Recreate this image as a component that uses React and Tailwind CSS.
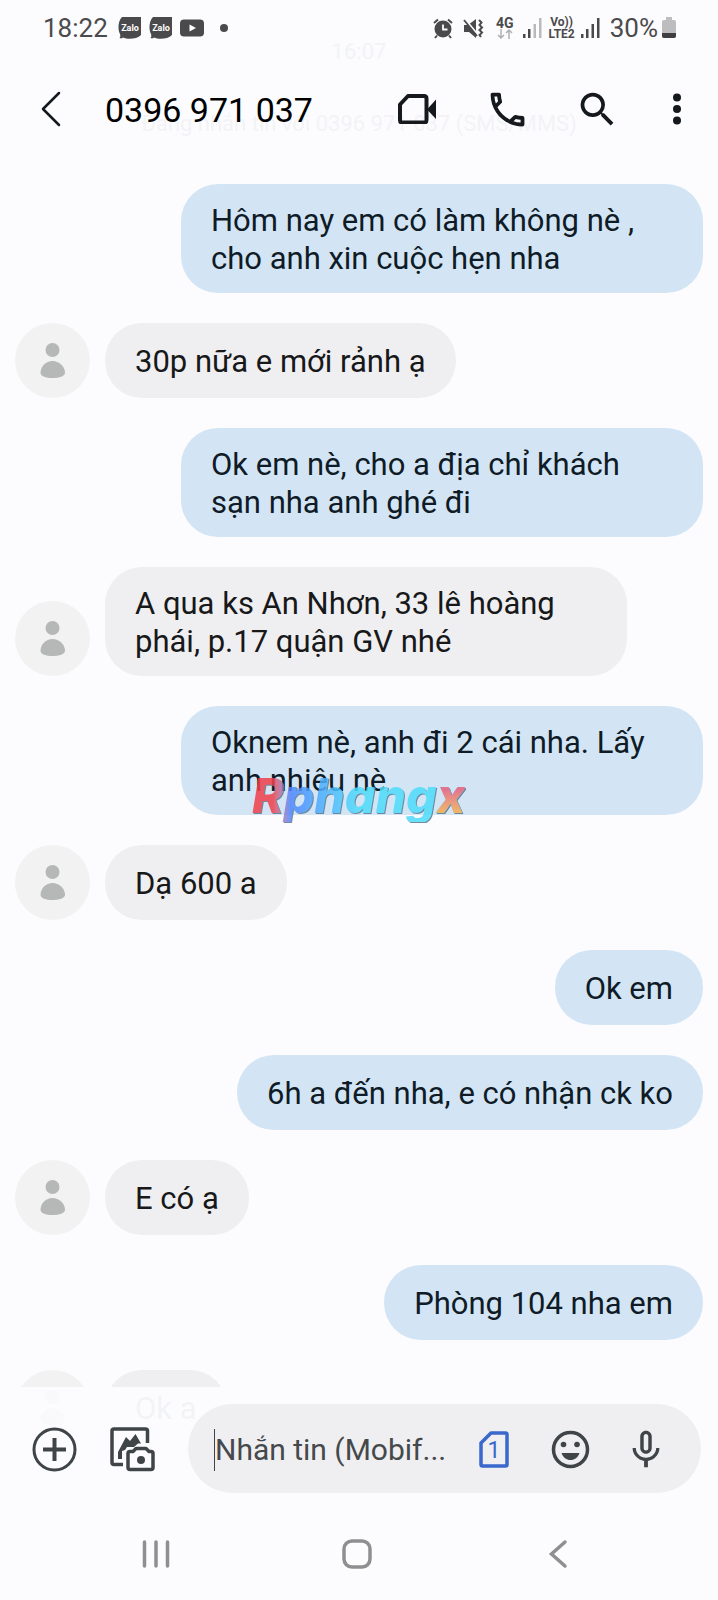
import { useState } from "react";
import { MdMicNone, MdOutlineCall, MdSearch } from "react-icons/md";

const messages = [
  { id: 1, mine: true, text: "Hôm nay em có làm không nè ,\ncho anh xin cuộc hẹn nha" },
  { id: 2, mine: false, text: "30p nữa e mới rảnh ạ" },
  { id: 3, mine: true, text: "Ok em nè, cho a địa chỉ khách\nsạn nha anh ghé đi" },
  { id: 4, mine: false, text: "A qua ks An Nhơn, 33 lê hoàng\nphái, p.17 quận GV nhé" },
  { id: 5, mine: true, text: "Oknem nè, anh đi 2 cái nha. Lấy\nanh nhiêu nè", watermark: true },
  { id: 6, mine: false, text: "Dạ 600 a" },
  { id: 7, mine: true, text: "Ok em" },
  { id: 8, mine: true, text: "6h a đến nha, e có nhận ck ko" },
  { id: 9, mine: false, text: "E có ạ" },
  { id: 10, mine: true, text: "Phòng 104 nha em" },
  { id: 11, mine: false, text: "Ok a" },
];

const ZaloIcon = () => (
  <svg width="24" height="24" viewBox="0 0 24 24">
    <path
      d="M4 1H23V19C19 23 10 24 5 21.500C4 22.500 3 22.500 1.500 22C2.500 21 2.500 20 2 18C-.5 13 0 5 4 1Z"
      fill="#4a4a4c"
    />
    <text
      x="12"
      y="15"
      textAnchor="middle"
      fontSize="9"
      fontWeight="700"
      fontFamily="Roboto, sans-serif"
      fill="#fff"
    >
      Zalo
    </text>
  </svg>
);

const YoutubeIcon = () => (
  <svg width="24" height="18" viewBox="0 0 24 18">
    <rect y="0.500" width="24" height="17" rx="4" fill="#4a4a4c" />
    <path d="M9.500 5.500L16 9L9.500 12.500Z" fill="#fff" />
  </svg>
);

const AlarmIcon = () => (
  <svg width="20" height="21" viewBox="0 0 20 21">
    <circle cx="10" cy="11" r="8.500" fill="#4a4a4c" />
    <path
      d="M1 5L5 1.500M19 5L15 1.500M4 17.500L2 20M16 17.500L18 20"
      stroke="#4a4a4c"
      strokeWidth="2"
    />
    <path d="M10 6.500V11.500H14.500" fill="none" stroke="#fcfcfe" strokeWidth="1.800" />
  </svg>
);

const MuteIcon = () => (
  <svg width="21" height="21" viewBox="0 0 21 21">
    <path d="M1 7H5L13 1V20L6 14H1Z" fill="#4a4a4c" />
    <path d="M1 0L15 17" stroke="#fcfcfe" strokeWidth="2" />
    <path d="M1 2L14 18" stroke="#4a4a4c" strokeWidth="1.800" />
    <path
      d="M16 2L18.500 4.500L16.500 7L19 9.500L16.500 12L19 14.500L16.500 17L18 19"
      fill="none"
      stroke="#4a4a4c"
      strokeWidth="2"
    />
  </svg>
);

const SignalIcon = ({ weak }) => (
  <svg width="19" height="20" viewBox="0 0 19 20" fill="#4a4a4c">
    <rect x="0" y="16" width="2.500" height="4" />
    <rect x="5" y="11" width="2.500" height="9" />
    <rect x="10.500" y="6" width="2.500" height="14" fill={weak ? "#b9b9bb" : "#4a4a4c"} />
    <rect x="16" y="0" width="2.500" height="20" fill={weak ? "#b9b9bb" : "#4a4a4c"} />
  </svg>
);

const BatteryIcon = () => (
  <svg width="14" height="22" viewBox="0 0 14 22">
    <path
      d="M4 0H10V3H12Q14 3 14 5V19Q14 21 12 21H2Q0 21 0 19V5Q0 3 2 3H4Z"
      fill="#bdbdbf"
    />
    <path d="M0 16H14V19Q14 21 12 21H2Q0 21 0 19Z" fill="#3f3f41" />
  </svg>
);

const StatusBar = () => (
  <div className="flex h-14 items-center justify-between pr-[42px] pl-[43px] text-[26px] leading-8 text-[#4a4a4c]">
    <div className="flex items-center gap-2">
      <span>18:22</span>
      <div className="ml-[2px] flex items-center gap-[7px]">
        <ZaloIcon />
        <ZaloIcon />
        <YoutubeIcon />
      </div>
      <span className="ml-2 h-2 w-2 rounded-full bg-[#4a4a4c]" />
    </div>
    <div className="flex items-center gap-[10px]">
      <AlarmIcon />
      <MuteIcon />
      <div className="ml-[2px] flex flex-col items-center text-[14px] leading-[12px] font-bold">
        4G
        <svg width="16" height="10" viewBox="0 0 16 10" fill="none" stroke="#b0b0b2" strokeWidth="1.500">
          <path d="M4 0V9M1 6L4 9L7 6M12 10V1M9 4L12 1L15 4" />
        </svg>
      </div>
      <SignalIcon weak />
      <div className="-mx-1 flex flex-col items-center text-[12px] leading-[12px] font-bold">
        <span>Vo))</span>
        <span>LTE2</span>
      </div>
      <SignalIcon />
      <div className="flex items-center gap-1">
        <span>30%</span>
        <BatteryIcon />
      </div>
    </div>
  </div>
);

const Toolbar = () => (
  <div className="flex h-[104px] items-center pt-[2px] pr-[31px] pl-[31px] text-[#15181c]">
    <button aria-label="Quay lại" className="flex h-10 w-10 items-center justify-center">
      <svg width="20" height="36" viewBox="0 0 20 36" fill="none" stroke="currentColor" strokeWidth="2.500" strokeLinecap="round" strokeLinejoin="round">
        <path d="M18 2L2 18L18 34" />
      </svg>
    </button>
    <h1 className="ml-[34px] flex-1 pt-[2px] text-[34px] leading-10 whitespace-nowrap text-black">
      0396 971 037
    </h1>
    <div className="flex items-center gap-[50px]">
      <button aria-label="Gọi video" className="flex h-10 w-10 items-center justify-center">
        <svg width="38" height="30" viewBox="0 0 38 30">
          <path
            d="M10 2H26Q28.500 2 28.500 4.500V26Q28.500 28.500 26 28.500H4Q2 28.500 2 26V10.500Z"
            fill="none"
            stroke="currentColor"
            strokeWidth="4"
            strokeLinejoin="round"
          />
          <path d="M29 15.500L38 5.500V25Z" fill="currentColor" />
        </svg>
      </button>
      <button aria-label="Gọi" className="flex h-10 w-10 items-center justify-center">
        <MdOutlineCall size={45} className="shrink-0" />
      </button>
      <button aria-label="Tìm kiếm" className="flex h-10 w-10 items-center justify-center">
        <MdSearch size={45} className="shrink-0" />
      </button>
      <button aria-label="Thêm" className="flex h-10 w-5 items-center justify-center">
        <svg width="8" height="32" viewBox="0 0 8 32" fill="currentColor">
          <circle cx="4" cy="4.500" r="4" />
          <circle cx="4" cy="16" r="4" />
          <circle cx="4" cy="27.500" r="4" />
        </svg>
      </button>
    </div>
  </div>
);

const Avatar = () => (
  <svg width="75" height="75" viewBox="0 0 75 75" className="mr-[15px] shrink-0">
    <circle cx="37.500" cy="37.500" r="37.500" fill="#f2f2f2" />
    <circle cx="37.500" cy="27" r="7" fill="#b5b8b7" />
    <path
      d="M25.500 50C25.500 43 31 38 37.500 38C44 38 50 43 50 50C50 53 44 55 37.500 55C31 55 25.500 53 25.500 50Z"
      fill="#b5b8b7"
    />
  </svg>
);

const Watermark = () => (
  <div className="absolute top-[64px] left-[71px] bg-linear-to-r from-[#f0404c] from-10% via-[#4f86ff] via-18% to-[#4fdcfb] to-50% bg-clip-text font-['Inter',sans-serif] text-[48px] leading-[52px] font-extrabold text-transparent italic opacity-85 drop-shadow-[1px_1px_0_#5a7a90]">
    Rphang
    <span className="bg-linear-to-b from-[#e8607c] from-40% to-[#f5b04a] to-80% bg-clip-text">x</span>
  </div>
);

const Message = ({ message }) => (
  <li className={`flex items-end ${message.mine ? "justify-end" : "justify-start"}`}>
    {!message.mine && <Avatar />}
    <div
      className={`relative flex min-h-[75px] items-center rounded-[37px] px-[30px] pt-[18px] pb-[15px] ${
        message.text.includes("\n") ? "w-[522px]" : "max-w-[522px]"
      } ${message.mine ? "bg-[#d3e5f4] text-[#0f1b26]" : "bg-[#efeff1] text-[#17181a]"}`}
    >
      <p className="whitespace-pre-line">{message.text}</p>
      {message.watermark && <Watermark />}
    </div>
  </li>
);

const Composer = () => {
  const [draft, setDraft] = useState("");

  return (
    <form
      className="relative z-10 flex items-center bg-[#fcfcfe]/96 pt-[17px] pr-[17px] pb-[13px] pl-8 text-[#3f4447]"
      onSubmit={(e) => e.preventDefault()}
    >
      <button type="button" aria-label="Đính kèm" className="pt-[2px]">
        <svg width="45" height="45" viewBox="0 0 45 45" fill="none" stroke="currentColor" strokeWidth="3">
          <circle cx="22.500" cy="22.500" r="20.500" />
          <path d="M22.500 11V34M11 22.500H34" strokeWidth="4" />
        </svg>
      </button>
      <button type="button" aria-label="Thư viện ảnh" className="ml-[33px] pt-[2px]">
        <svg width="46" height="45" viewBox="0 0 46 45">
          <path
            d="M37.500 16V4Q37.500 2 35.500 2H4Q2 2 2 4V35.500Q2 37.500 4 37.500H13"
            fill="none"
            stroke="currentColor"
            strokeWidth="3.500"
          />
          <path
            d="M8 32V25L16 10L20 14L25.500 7L31 16.500H28L24 20H17L15 23L12 24V32Z"
            fill="currentColor"
          />
          <path
            d="M20 24.500H23L26 21.500H36L39 24.500H41Q43 24.500 43 26.500V40.500Q43 42.500 41 42.500H20Q18 42.500 18 40.500V26.500Q18 24.500 20 24.500Z"
            fill="none"
            stroke="currentColor"
            strokeWidth="3.500"
            strokeLinejoin="round"
          />
          <circle cx="31" cy="33" r="4" fill="currentColor" />
        </svg>
      </button>
      <div className="ml-8 flex h-[89px] min-w-0 flex-1 items-center rounded-full bg-[#efeff1] pt-[2px] pr-8 pl-[26px]">
        <input
          type="text"
          aria-label="Nhắn tin"
          placeholder="Nhắn tin (Mobif..."
          value={draft}
          onChange={(e) => setDraft(e.target.value)}
          className="h-[42px] min-w-0 flex-1 border-l border-[#3f4447] bg-transparent text-[30px] outline-none placeholder:text-[#45494c]"
        />
        <button type="button" aria-label="SIM 1" className="ml-4">
          <svg width="30" height="37" viewBox="0 0 30 37">
            <path
              d="M12 2H26.500Q28 2 28 3.500V33.500Q28 35 26.500 35H3.500Q2 35 2 33.500V12Z"
              fill="none"
              stroke="#3b68cc"
              strokeWidth="3.500"
              strokeLinejoin="round"
            />
            <text x="15" y="27" textAnchor="middle" fontSize="23" fill="#3b68cc">
              1
            </text>
          </svg>
        </button>
        <button type="button" aria-label="Biểu tượng cảm xúc" className="ml-[42px]">
          <svg width="39" height="39" viewBox="0 0 39 39">
            <circle cx="19.500" cy="19.500" r="17" fill="none" stroke="currentColor" strokeWidth="3.500" />
            <circle cx="12.500" cy="14.500" r="2.800" fill="currentColor" />
            <circle cx="26" cy="14.500" r="2.800" fill="currentColor" />
            <path d="M10.500 23H28.500C27 27.500 23.500 30 19.500 30C15.500 30 12 27.500 10.500 23Z" fill="currentColor" />
          </svg>
        </button>
        <button type="button" aria-label="Ghi âm" className="ml-[33px]">
          <MdMicNone size={46} />
        </button>
      </div>
    </form>
  );
};

const NavBar = () => (
  <nav className="relative z-10 flex h-[94px] items-center justify-center gap-[171px] bg-[#fcfcfe] pt-[2px] pr-1">
    <button aria-label="Gần đây">
      <svg width="30" height="30" viewBox="0 0 30 30" stroke="#8f8f91" strokeWidth="3.500" strokeLinecap="round">
        <path d="M3.500 3V27M15 3V27M26.500 3V27" />
      </svg>
    </button>
    <button aria-label="Trang chủ">
      <svg width="30" height="30" viewBox="0 0 30 30" fill="none" stroke="#8f8f91" strokeWidth="3.500">
        <rect x="2" y="2" width="26" height="26" rx="8" />
      </svg>
    </button>
    <button aria-label="Trở về">
      <svg width="30" height="30" viewBox="0 0 30 30" fill="none" stroke="#8f8f91" strokeWidth="3.500" strokeLinecap="round">
        <path d="M22 3L8.500 15L22 27" />
      </svg>
    </button>
  </nav>
);

const App = () => {
  return (
    <div className="relative flex h-screen flex-col overflow-hidden bg-[#fcfcfe] font-['Roboto','Noto_Sans',sans-serif]">
      {/* conversation intro showing faintly through the header */}
      <div className="absolute inset-x-0 top-9 flex flex-col items-center text-[22px] leading-8 text-[#f3f3f6]">
        <span>16:07</span>
        <span className="mt-10">Đang nhắn tin với 0396 971 037 (SMS/MMS)</span>
      </div>

      <header className="relative">
        <StatusBar />
        <Toolbar />
      </header>

      <main className="min-h-0 flex-1">
        <ul className="flex flex-col gap-[30px] px-[15px] pt-6 text-[31px] leading-[38px]">
          {messages.map((message) => (
            <Message key={message.id} message={message} />
          ))}
        </ul>
      </main>

      <Composer />
      <NavBar />
    </div>
  );
};

export default App;
